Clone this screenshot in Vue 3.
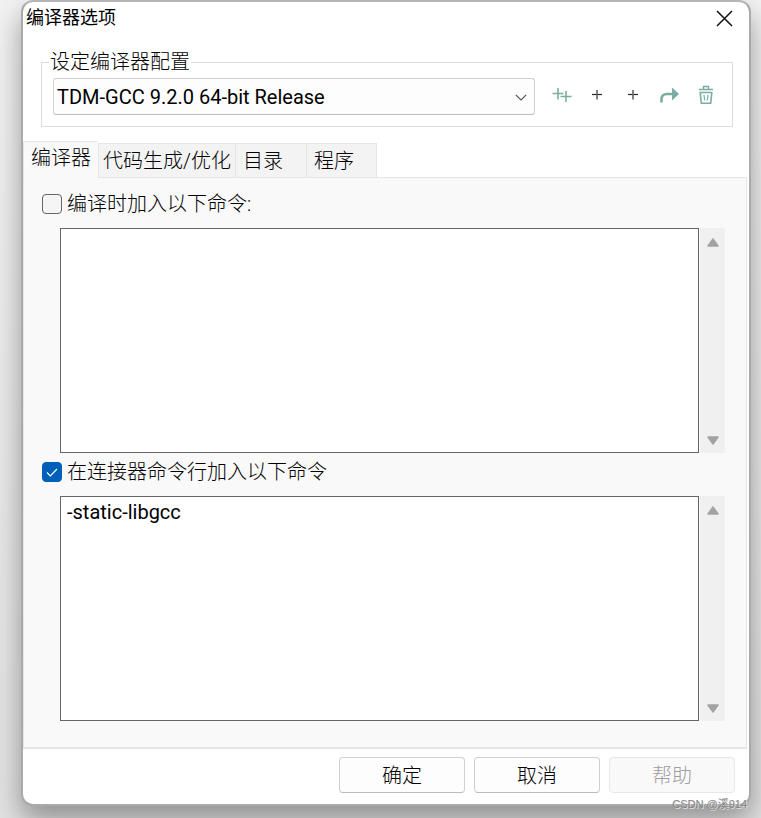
<script setup>
import { ref } from 'vue'

const profile = ref('TDM-GCC 9.2.0 64-bit Release')
const tabs = ['编译器', '代码生成/优化', '目录', '程序']
const active = ref(0)
const groups = ref([
  { id: 'compile', label: '编译时加入以下命令:', on: false, text: '' },
  { id: 'link', label: '在连接器命令行加入以下命令', on: true, text: '-static-libgcc' }
])
</script>

<template>
  <main class="desktop">
    <section class="window">
      <header class="titlebar">
        <h1>编译器选项</h1>
        <button class="close" type="button" aria-label="关闭">
          <svg width="17" height="17" viewBox="0 0 17 17"><path d="M1 1L16 16M16 1L1 16" stroke="#111" stroke-width="1.5" fill="none" /></svg>
        </button>
      </header>

      <fieldset class="config">
        <legend>设定编译器配置</legend>
        <div class="config-row">
          <div class="combo">
            <select v-model="profile" aria-label="设定编译器配置">
              <option>TDM-GCC 9.2.0 64-bit Release</option>
            </select>
            <svg class="chevron" width="12" height="7" viewBox="0 0 12 7"><path d="M.8 .8L6 6L11.200 .8" stroke="#555" stroke-width="1.200" fill="none" /></svg>
          </div>
          <div class="tools">
            <button type="button" aria-label="复制">
              <svg width="20" height="20" viewBox="0 0 20 20"><path d="M0.500 8.500H11.500M6 3V14.500M8.500 11.500H19.500M14 6V17" stroke="#7bada5" stroke-width="1.600" fill="none" /></svg>
            </button>
            <button type="button" aria-label="新建">
              <svg width="20" height="20" viewBox="0 0 20 20"><path d="M4 9.500H14" stroke="#222230" stroke-width="1.200" fill="none" /><path d="M9 5V14.500" stroke="#62626e" stroke-width="1.600" fill="none" /></svg>
            </button>
            <button type="button" aria-label="添加">
              <svg width="20" height="20" viewBox="0 0 20 20"><path d="M4 9.500H14" stroke="#222230" stroke-width="1.200" fill="none" /><path d="M9 5V14.500" stroke="#62626e" stroke-width="1.600" fill="none" /></svg>
            </button>
            <button type="button" aria-label="重命名">
              <svg width="20" height="20" viewBox="0 0 20 20"><path d="M1.500 17.500V14.500Q1.500 9 7 9H13" stroke="#7bada5" stroke-width="2.600" fill="none" /><path d="M12 2.500L19 9L12 15.500Z" fill="#7bada5" /></svg>
            </button>
            <button type="button" aria-label="删除">
              <svg width="20" height="20" viewBox="0 0 20 20" stroke="#7bada5" fill="none"><path d="M3 4.500H17" stroke-width="1.500" /><path d="M7.500 4V1.500H12.500V4" stroke-width="1.400" /><path d="M4.200 7.500H15.800L14.700 18.300H5.300Z" stroke-width="1.600" stroke-linejoin="round" /><path d="M8 10L8.700 15.500M12 10L11.300 15.500" stroke-width="1.200" /></svg>
            </button>
          </div>
        </div>
      </fieldset>

      <div class="tabs" role="tablist">
        <button
          v-for="(tab, i) in tabs"
          :key="tab"
          type="button"
          role="tab"
          :aria-selected="active === i"
          class="tab"
          :class="{ active: active === i, long: tab.length > 4 }"
          @click="active = i"
        >{{ tab }}</button>
      </div>

      <div class="panel" role="tabpanel">
        <div v-for="g in groups" :key="g.id" class="group">
          <label class="check">
            <input v-model="g.on" type="checkbox" />
            <span class="box"><svg v-if="g.on" width="12" height="9" viewBox="0 0 12 9"><path d="M1 4.500L4.300 7.800L11 1" stroke="#fff" stroke-width="1.200" fill="none" /></svg></span>
            <span>{{ g.label }}</span>
          </label>
          <div class="editor">
            <textarea v-model="g.text" :aria-label="g.label" spellcheck="false"></textarea>
            <div class="scroll">
              <button type="button" aria-label="向上"><svg width="12" height="9" viewBox="0 0 12 9"><path d="M6 1L11 8H1Z" fill="#a3a3a3" stroke="#a3a3a3" stroke-width="1.500" stroke-linejoin="round" /></svg></button>
              <button type="button" aria-label="向下"><svg width="12" height="9" viewBox="0 0 12 9"><path d="M6 8L11 1H1Z" fill="#a3a3a3" stroke="#a3a3a3" stroke-width="1.500" stroke-linejoin="round" /></svg></button>
            </div>
          </div>
        </div>
      </div>

      <footer class="actions">
        <button type="button">确定</button>
        <button type="button">取消</button>
        <button type="button" disabled>帮助</button>
      </footer>
      <span class="watermark">CSDN @溪914</span>
    </section>
  </main>
</template>

<style>
body {
  margin: 0;
  background: #ededed;
}
</style>

<style scoped>
* {
  box-sizing: border-box;
}
.desktop {
  min-height: 100vh;
  padding: 0 10px 12px 21px;
  overflow: hidden;
  background: linear-gradient(to bottom, #f2f2f2, #e2e2e2);
  font: 300 20px/24px Roboto, "Noto Sans CJK SC", sans-serif;
  color: #000;
}
button,
select,
textarea {
  font: inherit;
  color: inherit;
  margin: 0;
}
.window {
  position: relative;
  border: 2px solid #aaa;
  border-top-color: #b5b5b5;
  border-radius: 12px;
  background: #fff;
  box-shadow: 0 14px 28px rgba(0, 0, 0, 0.36);
}
.titlebar {
  display: flex;
  justify-content: space-between;
  align-items: center;
  height: 32px;
  padding: 0 16px 0 3px;
}
h1 {
  margin: 0;
  font-size: 18px;
  font-weight: 400;
}
.close,
.tools button,
.scroll button {
  display: flex;
  padding: 0;
  border: 0;
  background: none;
}
.config {
  min-width: 0;
  margin: 16px 16px 0 18px;
  padding: 4px 16px 11px 11px;
  border: 1px solid #dcdcdc;
}
legend {
  margin-left: -4px;
  padding: 0 1px;
}
.config-row {
  display: flex;
  gap: 17px;
}
.combo {
  position: relative;
  flex: 1;
}
select {
  display: block;
  appearance: none;
  width: 100%;
  height: 37px;
  padding: 0 32px 0 3px;
  border: 1px solid #d0d0d0;
  border-bottom-color: #bbb;
  border-radius: 3px;
  background: #fdfdfd;
  font-weight: 400;
}
.chevron {
  position: absolute;
  right: 8px;
  top: 16px;
  pointer-events: none;
}
.tools {
  display: flex;
  gap: 16px;
  padding-top: 7px;
}
.tabs {
  display: flex;
  align-items: flex-end;
  margin-top: 14px;
}
.tab {
  height: 34px;
  min-width: 71px;
  padding: 0 7px;
  border: 1px solid #e5e5e5;
  border-width: 1px 0 0 1px;
  background: #f3f3f3;
  text-align: left;
}
.tab.long {
  padding: 0 4px;
}
.tab:last-child {
  border-right-width: 1px;
}
.tab.active {
  z-index: 1;
  height: 37px;
  margin-bottom: -1px;
  padding: 0 7px 4px;
  border-radius: 2px 2px 0 0;
  background: #f9f9f9;
}
.panel {
  display: grid;
  gap: 7px;
  margin-right: 2px;
  padding: 14px 21px 26px 18px;
  border: 1px solid #e5e5e5;
  border-bottom-width: 2px;
  background: #f9f9f9;
}
.check {
  display: flex;
  align-items: center;
  gap: 5px;
  height: 24px;
}
.check input {
  position: absolute;
  opacity: 0;
}
.box {
  display: flex;
  align-items: center;
  justify-content: center;
  width: 20px;
  height: 20px;
  border: 1px solid #666;
  border-radius: 4px;
  background: #f5f5f5;
}
input:checked + .box {
  border-color: #005fb8;
  background: #005fb8;
}
.editor {
  display: flex;
  gap: 1px;
  margin: 12px 0 0 18px;
}
textarea {
  display: block;
  flex: 1;
  min-width: 0;
  height: 225px;
  padding: 3px 6px;
  border: 1px solid #666;
  border-radius: 0;
  outline: 0;
  resize: none;
  background: #fff;
  font-weight: 400;
}
.scroll {
  display: flex;
  flex-direction: column;
  align-items: center;
  justify-content: space-between;
  width: 25px;
  padding: 10px 0 8px;
  background: #f0f0f0;
}
.actions {
  display: flex;
  justify-content: flex-end;
  gap: 9px;
  padding: 8px 14px 11px;
}
.actions button {
  width: 126px;
  height: 36px;
  padding: 1px 0 0;
  border: 1px solid #d0d0d0;
  border-bottom-color: #bbb;
  border-radius: 4px;
  background: #fdfdfd;
}
.actions button:disabled {
  border-color: #e8e8e8;
  background: #f9f9f9;
  color: #9d9d9d;
}
.watermark {
  position: absolute;
  right: 2px;
  bottom: -8px;
  font: 11px/16px "Liberation Sans", "Noto Sans CJK SC", sans-serif;
  color: #858585;
  text-shadow: 1px 1px 0 #ddd;
}
</style>
